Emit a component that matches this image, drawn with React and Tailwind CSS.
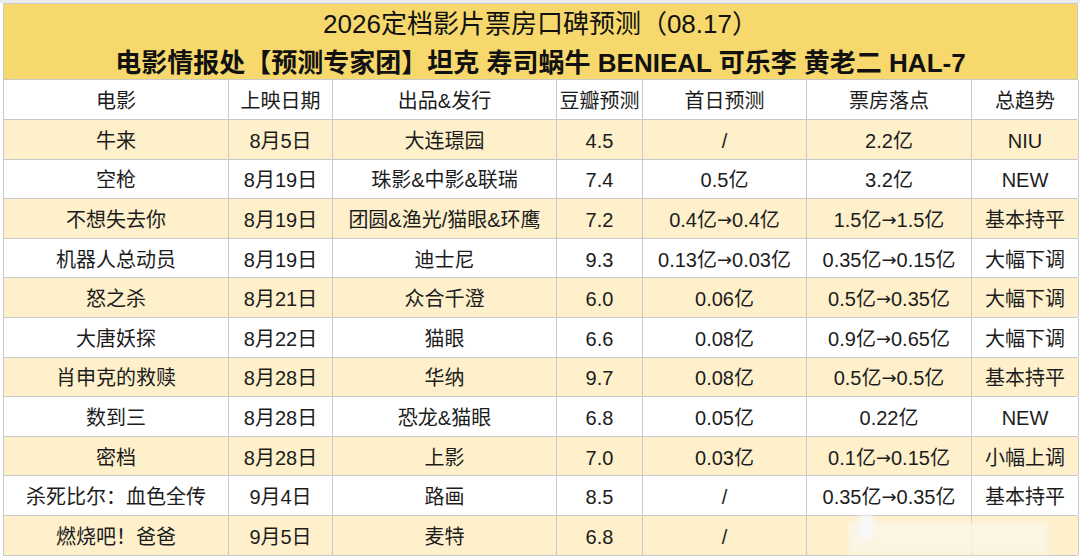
import React from 'react';

const cols = 'grid grid-cols-[225px_104px_224px_86px_164px_165px_107px]';

const headers = ['电影', '上映日期', '出品&发行', '豆瓣预测', '首日预测', '票房落点', '总趋势'];

const rows = [
  ['牛来', '8月5日', '大连璟园', '4.5', '/', '2.2亿', 'NIU'],
  ['空枪', '8月19日', '珠影&中影&联瑞', '7.4', '0.5亿', '3.2亿', 'NEW'],
  ['不想失去你', '8月19日', '团圆&渔光/猫眼&环鹰', '7.2', '0.4亿→0.4亿', '1.5亿→1.5亿', '基本持平'],
  ['机器人总动员', '8月19日', '迪士尼', '9.3', '0.13亿→0.03亿', '0.35亿→0.15亿', '大幅下调'],
  ['怒之杀', '8月21日', '众合千澄', '6.0', '0.06亿', '0.5亿→0.35亿', '大幅下调'],
  ['大唐妖探', '8月22日', '猫眼', '6.6', '0.08亿', '0.9亿→0.65亿', '大幅下调'],
  ['肖申克的救赎', '8月28日', '华纳', '9.7', '0.08亿', '0.5亿→0.5亿', '基本持平'],
  ['数到三', '8月28日', '恐龙&猫眼', '6.8', '0.05亿', '0.22亿', 'NEW'],
  ['密档', '8月28日', '上影', '7.0', '0.03亿', '0.1亿→0.15亿', '小幅上调'],
  ['杀死比尔：血色全传', '9月4日', '路画', '8.5', '/', '0.35亿→0.35亿', '基本持平'],
  ['燃烧吧！爸爸', '9月5日', '麦特', '6.8', '/', '', ''],
];

// arrows drawn with DejaVu so they keep a normal size
const withArrow = (text) => {
  const parts = text.split('→');
  if (parts.length < 2) return text;
  return (
    <>
      {parts[0]}
      <span style={{ fontFamily: '"DejaVu Sans", sans-serif' }} className="text-[18px]">→</span>
      {parts[1]}
    </>
  );
};

const Row = ({ cells, bg, height }) => (
  <div className={`${cols} ${bg} border-b border-[#c9c9c9]`} style={{ height }}>
    {cells.map((c, i) => (
      <div
        key={i}
        className="flex items-center justify-center pt-[3px] border-r border-[#c9c9c9] text-[20px] leading-none whitespace-nowrap overflow-hidden"
      >
        {withArrow(c)}
      </div>
    ))}
  </div>
);

export default function App() {
  return (
    <div
      className="relative w-[1080px] h-[560px] overflow-hidden bg-white text-[#1c1c1c]"
      style={{ fontFamily: '"Liberation Sans", "Noto Sans CJK SC", sans-serif' }}
    >
      <div className="h-[3px] bg-[#ececec]" />
      <div className="ml-[3px] w-[1075px] border-l border-[#c9c9c9]">
        <div className="h-[77px] bg-[#f6d86c] border-t border-b border-r border-[#c9c9c9] flex flex-col items-center text-[26px] text-[#111]">
          <div className="leading-[38px] pt-[1px]">2026定档影片票房口碑预测（08.17）</div>
          <div className="leading-[38px] pt-[1px] font-bold">
            电影情报处【预测专家团】坦克 寿司蜗牛 BENIEAL 可乐李 黄老二 HAL-7
          </div>
        </div>
        <Row cells={headers} bg="bg-white" height="40px" />
        {rows.map((r, i) => (
          <Row key={i} cells={r} bg={i % 2 === 0 ? 'bg-[#fdf0cb]' : 'bg-white'} height="39.6px" />
        ))}
      </div>
      {/* blurred watermark over the last row */}
      <div className="absolute left-[848px] top-[522px] w-[200px] h-[32px] bg-[#fbf6e6] blur-[2px] opacity-90" />
      <div className="absolute left-[858px] top-[515px] w-[16px] h-[24px] bg-[#f7f7f7] blur-[2px] rounded-sm" />
    </div>
  );
}
